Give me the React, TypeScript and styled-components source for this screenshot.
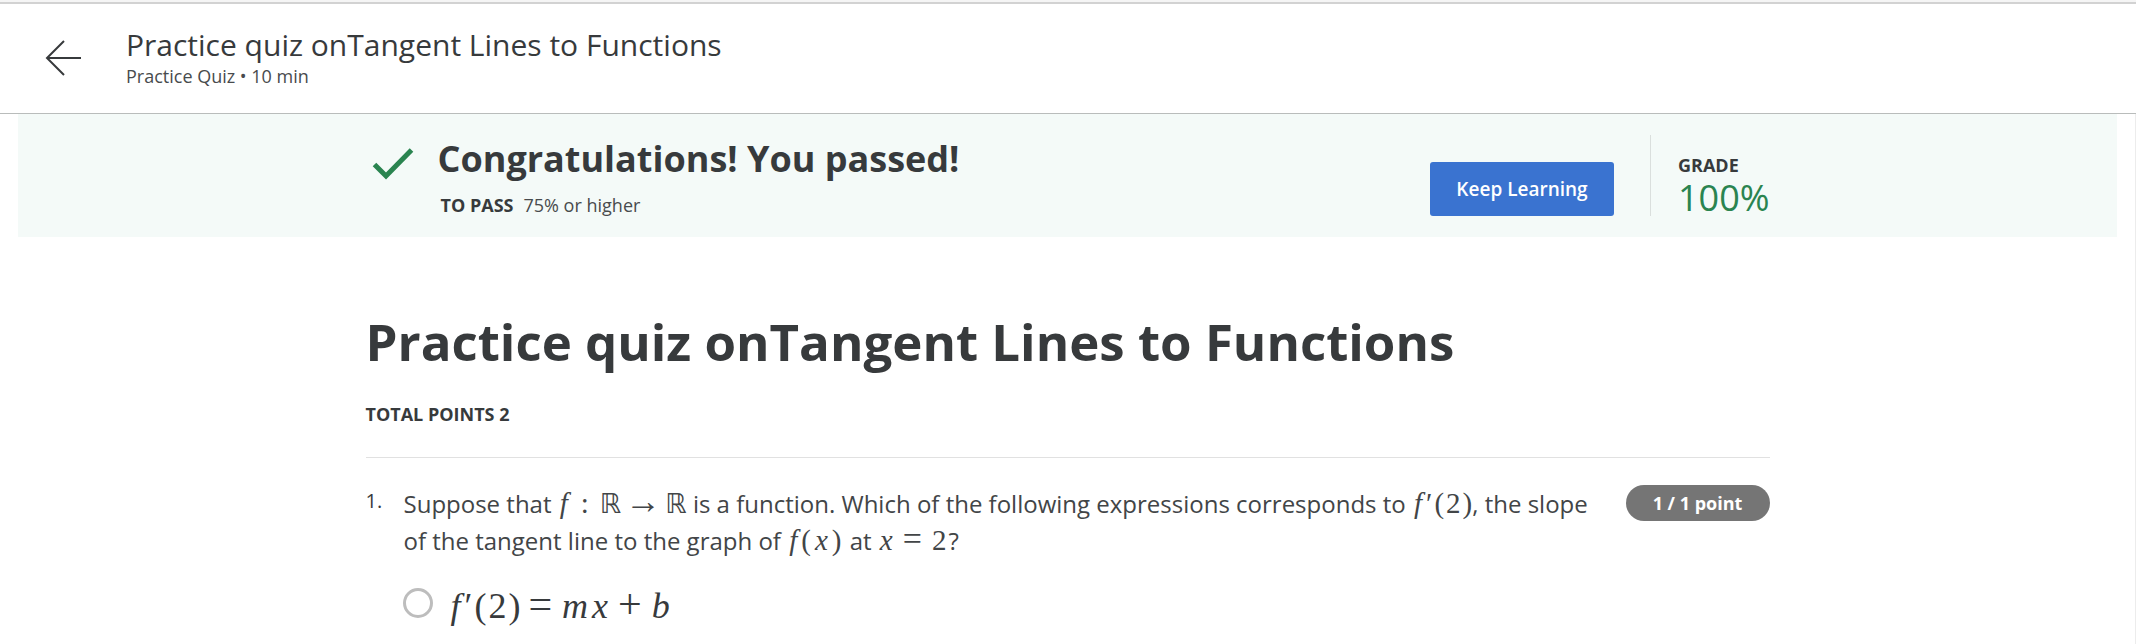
import React from "react";
import styled, { createGlobalStyle } from "styled-components";

const ink = "#373a3c";
const green = "#2a8450";

const GlobalStyle = createGlobalStyle`
  * { box-sizing: border-box; }
  html { overflow: hidden; }
  body {
    margin: 0;
    background: #fff;
    color: ${ink};
    font-family: "Open Sans", "Noto Sans", sans-serif;
    font-size: 18px;
  }
  h1, h2, p { margin: 0; }
`;

const Header = styled.header`
  display: flex;
  align-items: center;
  gap: 45px;
  height: 114px;
  padding: 0 46px 0 45px;
  border-top: 2px solid #f5f5f5;
  border-bottom: 1px solid #b9bcbb;
  box-shadow: inset 0 2px 0 #d2d2d2;
`;

const BackButton = styled.button`
  display: flex;
  width: 36px;
  padding: 0;
  border: 0;
  background: none;
  color: ${ink};
  cursor: pointer;
`;

const HeaderTitle = styled.p`
  font-size: 30px;
  line-height: 36px;
`;

const HeaderMeta = styled.p`
  font-size: 18px;
  line-height: 26px;
  color: #484b4d;
`;

const Page = styled.div`
  border-right: 1px solid #ececec;
  min-height: calc(100vh - 114px);
`;

const Banner = styled.section`
  margin: 0 18px;
  background: #f4faf8;
`;

const Column = styled.div`
  width: 100%;
  max-width: 1404px;
  margin: 0 auto;
`;

const BannerRow = styled(Column)`
  display: flex;
  align-items: flex-end;
  padding: 21px 0;
`;

const Status = styled.div`
  display: flex;
  flex: 1;
  gap: 24px;
  padding: 0 0 0 6px;
`;

const CheckIcon = styled.svg`
  margin-top: 12px;
`;

const StatusTitle = styled.h2`
  font-size: 36px;
  font-weight: 700;
  line-height: 47px;
`;

const PassLine = styled.p`
  padding: 12px 0 0 3px;
  color: #484b4d;
  font-size: 18px;
  line-height: 22px;
`;

const Strong = styled.span`
  margin-right: 10px;
  color: ${ink};
  font-weight: 700;
`;

const PrimaryButton = styled.button`
  width: 184px;
  height: 54px;
  border: 0;
  border-radius: 3px;
  background: #3a73d0;
  color: #fff;
  font: 600 19px "Open Sans", sans-serif;
  cursor: pointer;
`;

const Grade = styled.div`
  margin-left: 36px;
  padding: 15px 0 0 27px;
  border-left: 1px solid #dadfdd;
`;

const GradeLabel = styled.p`
  font-size: 18px;
  font-weight: 700;
  line-height: 30px;
`;

const GradeValue = styled.p`
  color: ${green};
  font-size: 36px;
  line-height: 36px;
`;

const QuizTitle = styled.h1`
  padding-top: 69px;
  font-size: 51px;
  font-weight: 700;
  line-height: 70px;
`;

const TotalPoints = styled.p`
  padding: 25px 0 30px;
  border-bottom: 1px solid #e1e1e1;
  font-size: 18px;
  font-weight: 700;
  line-height: 26px;
`;

const Question = styled.section`
  display: grid;
  grid-template-columns: 38px minmax(0, 1fr) 144px;
  align-items: start;
  padding-top: 27px;
`;

const Number = styled.span`
  font-size: 20px;
  line-height: 32px;
`;

const Prompt = styled.p`
  padding-right: 28px;
  color: #424547;
  font-size: 24px;
  line-height: 37px;
`;

const Points = styled.span`
  border-radius: 18px;
  background: #757575;
  color: #fff;
  font-size: 18px;
  font-weight: 700;
  line-height: 36px;
  text-align: center;
`;

const Option = styled.label`
  display: flex;
  grid-column: 2;
  align-items: center;
  gap: 16px;
  margin: 17px 0 0 -1px;
  height: 54px;
`;

const Radio = styled.input`
  appearance: none;
  width: 30px;
  height: 30px;
  margin: 0;
  border: 3px solid #bdbdbd;
  border-radius: 50%;
  background: #fff;
  &:checked { border-color: #3a73d0; border-width: 9px; }
`;

const Formula = styled.span<{ $large?: boolean }>`
  padding-top: ${(p) => (p.$large ? 6 : 0)}px;
  font-family: "Liberation Serif", "DejaVu Serif", serif;
  font-size: ${(p) => (p.$large ? 36 : 29)}px;
  line-height: ${(p) => (p.$large ? "36px" : "0")};
  white-space: nowrap;
`;

const Var = styled.i`
  padding: 0 2px;
`;

const Prime = styled.span`
  padding: 0 2px;
`;

const Arg = styled.span`
  padding: 0 2px;
`;

const Rel = styled.span<{ $large?: boolean }>`
  padding: 0 8px;
  font-size: ${(p) => (p.$large ? 42 : 34)}px;
  line-height: 0;
`;

const Arrow = styled.span`
  padding: 0 4px;
  font-size: 36px;
  line-height: 0;
`;

const Colon = styled.span`
  padding: 0 11px;
`;

const Set = styled.span`
  font-family: "DejaVu Sans", sans-serif;
  font-size: 27px;
  line-height: 0;
`;

export default function App() {
  return (
    <>
      <GlobalStyle />
      <Header>
        <BackButton aria-label="Back">
          <svg width="36" height="36" viewBox="0 0 36 36" fill="none" stroke="currentColor" strokeWidth="2">
            <path d="M36 18H2M19 1L2 18L19 35" />
          </svg>
        </BackButton>
        <div>
          <HeaderTitle>Practice quiz onTangent Lines to Functions</HeaderTitle>
          <HeaderMeta>Practice Quiz • 10 min</HeaderMeta>
        </div>
      </Header>
      <Page>
        <Banner>
          <BannerRow>
            <Status>
              <CheckIcon width="42" height="34" viewBox="0 0 42 34" fill="none" stroke={green} strokeWidth="5">
                <path d="M2.5 17.5L14 29L39.500 3" />
              </CheckIcon>
              <div>
                <StatusTitle>Congratulations! You passed!</StatusTitle>
                <PassLine><Strong>TO PASS</Strong>75% or higher</PassLine>
              </div>
            </Status>
            <PrimaryButton>Keep Learning</PrimaryButton>
            <Grade>
              <GradeLabel>GRADE</GradeLabel>
              <GradeValue>100%</GradeValue>
            </Grade>
          </BannerRow>
        </Banner>
        <Column as="main">
          <QuizTitle>Practice quiz onTangent Lines to Functions</QuizTitle>
          <TotalPoints>TOTAL POINTS 2</TotalPoints>
          <Question>
            <Number>1.</Number>
            <Prompt>
              Suppose that <Formula><Var>f</Var><Colon>:</Colon><Set>ℝ</Set><Arrow>→</Arrow><Set>ℝ</Set></Formula> is a
              function. Which of the following expressions corresponds to{" "}
              <Formula><Var>f</Var><Prime>′</Prime>(<Arg>2</Arg>)</Formula>, the slope of the tangent line to the
              graph of <Formula><Var>f</Var><Arg>(</Arg><Var>x</Var><Arg>)</Arg></Formula> at{" "}
              <Formula><Var>x</Var><Rel>=</Rel><Arg>2</Arg></Formula>?
            </Prompt>
            <Points>1 / 1 point</Points>
            <Option>
              <Radio type="radio" name="answer" />
              <Formula $large>
                <Var>f</Var><Prime>′</Prime>(<Arg>2</Arg>)<Rel $large>=</Rel><Var>m</Var><Var>x</Var>
                <Rel $large>+</Rel><Var>b</Var>
              </Formula>
            </Option>
          </Question>
        </Column>
      </Page>
    </>
  );
}
